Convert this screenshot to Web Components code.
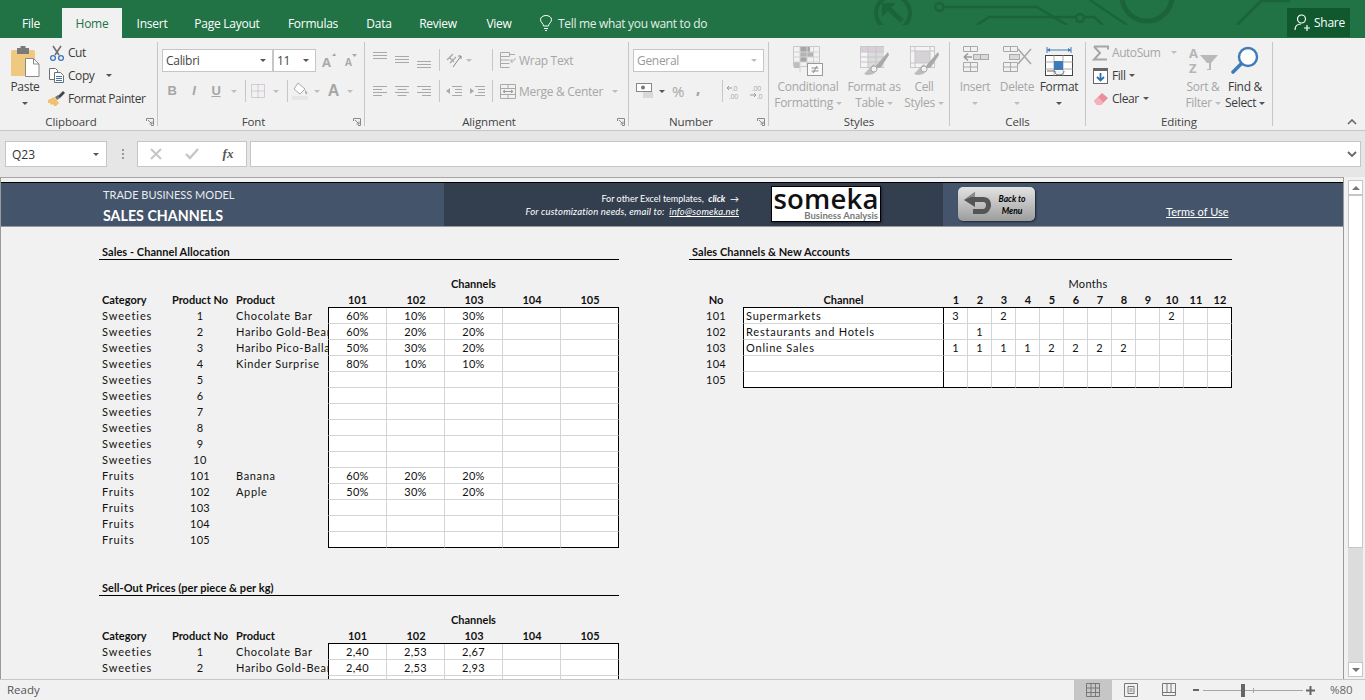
<!DOCTYPE html>
<html lang="en">
<head>
<meta charset="utf-8">
<title>Sales Channels</title>
<style>
  html, body { margin: 0; height: 100%; overflow: hidden; background: #f1f1f1; }
  body { display: flex; flex-direction: column; width: 1365px; height: 700px; font-family: "Open Sans", "Noto Sans", sans-serif; }
</style>
</head>
<body>

<excel-tabs></excel-tabs>

<excel-ribbon>
  <ribbon-group label="Clipboard" width="158" launcher>
    <div style="display:flex">
      <ribbon-big icon="paste" label="Paste" caret width="50" active></ribbon-big>
      <div style="display:flex;flex-direction:column;margin:-1px 0 0 -3px">
        <ribbon-small icon="cut" label="Cut" active></ribbon-small>
        <ribbon-small icon="copy" label="Copy" active caret="wide"></ribbon-small>
        <ribbon-small icon="painter" label="Format Painter" active></ribbon-small>
      </div>
    </div>
  </ribbon-group>

  <ribbon-group label="Font" width="207" launcher>
    <font-tools></font-tools>
  </ribbon-group>

  <ribbon-group label="Alignment" width="264" launcher>
    <align-tools></align-tools>
  </ribbon-group>

  <ribbon-group label="Number" width="140" launcher>
    <number-tools></number-tools>
  </ribbon-group>

  <ribbon-group label="Styles" width="181">
    <div style="display:flex;padding-left:1px">
      <ribbon-big icon="cond" label="Conditional|Formatting" caret width="76"></ribbon-big>
      <ribbon-big icon="table" label="Format as|Table" caret width="56"></ribbon-big>
      <ribbon-big icon="cellstyle" label="Cell|Styles" caret width="44"></ribbon-big>
    </div>
  </ribbon-group>

  <ribbon-group label="Cells" width="136">
    <div style="display:flex;padding-left:4px">
      <ribbon-big icon="insert" label="Insert" caret width="42"></ribbon-big>
      <ribbon-big icon="delete" label="Delete" caret width="42"></ribbon-big>
      <ribbon-big icon="format" label="Format" caret width="42" active></ribbon-big>
    </div>
  </ribbon-group>

  <ribbon-group label="Editing" width="187">
    <div style="display:flex">
      <div style="display:flex;flex-direction:column;box-sizing:border-box;margin-top:-1px;padding-left:5px;width:95px">
        <ribbon-small icon="sigma" label="AutoSum" caret="far"></ribbon-small>
        <ribbon-small icon="fill" label="Fill" active caret="near"></ribbon-small>
        <ribbon-small icon="eraser" label="Clear" active caret="near"></ribbon-small>
      </div>
      <ribbon-big icon="sort" label="Sort &amp;|Filter" caret width="44"></ribbon-big>
      <ribbon-big icon="find" label="Find &amp;|Select" caret width="40" active></ribbon-big>
    </div>
  </ribbon-group>
</excel-ribbon>

<formula-bar></formula-bar>

<div style="display:flex;height:502px">
  <work-sheet></work-sheet>
  <sheet-scrollbar></sheet-scrollbar>
</div>

<status-bar></status-bar>

<script>
const ink = '#a9a9a9';
const ICONS = {
  paste: [30, 31, `<rect x="1" y="4" width="24" height="26" rx="1.5" fill="#efc97f"/><rect x="7" y="2" width="12" height="6" fill="#7a7a7a"/><rect x="10.5" y="0" width="5" height="4" fill="#7a7a7a"/><path d="M15.5 12.5h8l5.5 5.5v12.5h-13.5z" fill="#fff" stroke="#8a8a8a"/><path d="M23.5 12.5v5.5h5.5" fill="none" stroke="#8a8a8a"/>`],
  cut: [16, 16, `<path d="M4 1l6 9M12 1l-6 9" stroke="#6f6f6f" stroke-width="1.6" fill="none"/><circle cx="4" cy="13" r="2.4" fill="none" stroke="#3c78b8" stroke-width="1.3"/><circle cx="12" cy="13" r="2.4" fill="none" stroke="#3c78b8" stroke-width="1.3"/>`],
  copy: [16, 15, `<path d="M.5.5h6l2 2v3h-3v6h-5z" fill="#fff" stroke="#6f6f6f"/><path d="M5.5 4.5h6l3 3v7h-9z" fill="#fff" stroke="#6f6f6f"/><path d="M7 8.5h6M7 10.5h6M7 12.5h6" stroke="#3c78b8"/>`],
  painter: [17, 15, `<path d="M0 9l6-3 5 6-3 3H6L5 13l-2 1-1-2-2 0z" fill="#efc16d"/><path d="M7 6l3-2 2 3-3 2z" fill="#777"/><path d="M10 5l5-5 2 2-5 5z" fill="#444"/>`],
  fontUp: [14, 15, `<text x="0" y="14" font-size="13" font-weight="700" fill="${ink}" font-family="Open Sans">A</text><path d="M10 3l2.5-3 1.5 3z" fill="${ink}"/>`],
  fontDown: [12, 13, `<text x="0" y="12" font-size="10" font-weight="700" fill="${ink}" font-family="Open Sans">A</text><path d="M7 0h5l-2.500 3z" fill="${ink}"/>`],
  borders: [14, 14, `<path d="M.5.5h13v13h-13zM7 .5v13M.5 7h13" fill="none" stroke="#b9a6bd" stroke-dasharray="1 1"/>`],
  bucket: [17, 18, `<path d="M6 1l7 6-5 5-6-5z" fill="#fff" stroke="${ink}"/><path d="M13 8c2 2 3 3 2 4s-2 0-2-4z" fill="${ink}"/><rect x="0" y="14" width="16" height="4" fill="#e6e6e6"/>`],
  alignTop: [14, 16, `<path d="M0 .5h14M0 3.500h14M0 6.500h14" stroke="${ink}"/>`],
  alignMid: [14, 16, `<path d="M0 4.500h14M0 7.500h14M0 10.500h14" stroke="${ink}"/>`],
  alignBot: [14, 16, `<path d="M0 9.500h14M0 12.500h14M0 15.500h14" stroke="${ink}"/>`],
  left: [14, 11, `<path d="M0 .5h14M0 3.500h9M0 6.500h14M0 9.500h9" stroke="${ink}"/>`],
  center: [14, 11, `<path d="M0 .5h14M2.500 3.500h9M0 6.500h14M2.500 9.500h9" stroke="${ink}"/>`],
  right: [14, 11, `<path d="M0 .5h14M5 3.500h9M0 6.500h14M5 9.500h9" stroke="${ink}"/>`],
  orient: [16, 16, `<path d="M1 8l6-6M4 11l6-6M3 5l5 5" stroke="${ink}" stroke-width="1.400" fill="none"/><path d="M7 15L15 4M15 4h-3M15 4v3" stroke="#888" fill="none"/>`],
  outdent: [16, 11, `<path d="M6 .5h10M9 3.500h7M9 6.500h7M6 9.500h10" stroke="${ink}"/><path d="M0 5l4-3v6z" fill="${ink}"/>`],
  indent: [16, 11, `<path d="M6 .5h10M9 3.500h7M9 6.500h7M6 9.500h10" stroke="${ink}"/><path d="M5 5L1 2v6z" fill="${ink}"/>`],
  wrap: [16, 16, `<path d="M.5.5h9v4h-9zM.5 4.500v11h9M.5 8h9M.5 11.500h9M10 2.500h5M15 6c0 3-2 3-4 3m1.500-2l-2 2 2 2" fill="none" stroke="${ink}"/>`],
  merge: [16, 15, `<path d="M.5.5h15v14H.5zM.5 4.500h15M.5 10.500h15M8 .5v4M8 10.500v4" fill="none" stroke="${ink}"/><path d="M3 7.500h10M3 7.500l2-1.500M3 7.500l2 1.500M13 7.500l-2-1.500M13 7.500l-2 1.500" stroke="#999" fill="none"/>`],
  money: [17, 16, `<rect x=".5" y=".5" width="15" height="8" fill="#fff" stroke="#888"/><circle cx="7" cy="4.500" r="2" fill="#777"/><path d="M7 10h10M7 12h10M7 14h10" stroke="#cfcfcf" stroke-width="1.400"/>`],
  decLess: [15, 15, `<text x="5" y="7" font-size="7" fill="${ink}" font-family="Open Sans">.0</text><text x="2" y="14.500" font-size="7" fill="${ink}" font-family="Open Sans">.00</text><path d="M0 4h5M0 4l2-2M0 4l2 2" stroke="#999" fill="none"/>`],
  decMore: [15, 15, `<text x="3" y="7" font-size="7" fill="${ink}" font-family="Open Sans">.00</text><text x="8" y="14.500" font-size="7" fill="${ink}" font-family="Open Sans">.0</text><path d="M1 11h6M7 11l-2-2M7 11l-2 2" stroke="#999" fill="none"/>`],
  cond: [30, 30, `<path d="M.5.5h26v20h-26z" fill="#f4f1f4" stroke="#c9c9c9"/><rect x="7" y="1" width="10" height="5" fill="#a6a6a6"/><rect x="7" y="6" width="14" height="5" fill="#b3b3b3"/><rect x="7" y="11" width="7" height="5" fill="#a6a6a6"/><rect x="1" y="16" width="6" height="6" fill="#bdbdbd"/><path d="M7 .5v26M14 .5v20M20.500 .5v20M.5 6h26M.5 11h26M.5 16h26" stroke="#d3d3d3" fill="none"/><rect x="14.500" y="17.500" width="15" height="12" fill="#fafafa" stroke="#999"/><path d="M18.500 22h7M18.500 25h7M24 20l-4 7" stroke="#8a8a8a"/>`],
  table: [29, 29, `<rect x=".5" y=".5" width="23" height="21" fill="#f7f2f7" stroke="#c9c9c9"/><rect x="1" y="1" width="23" height="5" fill="#d9cfd9"/><rect x="8" y="6" width="16" height="15" fill="#dcdcdc"/><path d="M8 .5v21M16 .5v21M.5 6h23M.5 11h23M.5 16h23" stroke="#c6c6c6" fill="none"/><path d="M28 6L15 21c3 2 6 0 6 0l8-12z" fill="#a9a9a9"/><path d="M14 18c-3 2-6 6-10 10 5 2 11 1 13-5z" fill="#bcbcbc"/><circle cx="14" cy="23" r="3" fill="#f1f1f1" stroke="#a9a9a9"/>`],
  cellstyle: [29, 29, `<rect x=".5" y=".5" width="24" height="21" fill="#f7f2f7" stroke="#c9c9c9"/><rect x="5" y="5" width="15" height="12" fill="#d4d4d4"/><path d="M5 .5v21M20 .5v21M.5 5h24M.5 17h24" stroke="#c6c6c6" fill="none"/><path d="M28 6L15 21c3 2 6 0 6 0l8-12z" fill="#a9a9a9"/><path d="M14 18c-3 2-6 6-10 10 5 2 11 1 13-5z" fill="#bcbcbc"/><circle cx="14" cy="23" r="3" fill="#f1f1f1" stroke="#a9a9a9"/>`],
  insert: [27, 26, `<path d="M1.500.5h14v5h-14zM8.500.5v5M1.500 16.500h14v9h-14zM8.500 16.500v9M1.500 21h14" fill="none" stroke="${ink}"/><rect x="11.500" y="8.500" width="15" height="5" fill="#d9d9d9" stroke="${ink}"/><path d="M18.500 8.500v5" stroke="${ink}"/><path d="M2 11h8M2 11l4-3.500M2 11l4 3.500" stroke="#999" stroke-width="1.500" fill="none"/>`],
  delete: [30, 26, `<path d="M1.500.5h14v5h-14zM8.500.5v5M1.500 16.500h14v9h-14zM8.500 16.500v9M1.500 21h14" fill="none" stroke="${ink}"/><rect x="7.500" y="8.500" width="10" height="5" fill="#d9d9d9" stroke="${ink}"/><path d="M16 3l13 15M29 3L16 18" stroke="#a9a9a9" stroke-width="1.600" fill="none"/>`],
  format: [28, 31, `<path d="M2 4h24M2 1v6M26 1v6" stroke="#3f7ab9" fill="none"/><path d="M2 4l3-2v4zM26 4l-3-2v4z" fill="#3f7ab9"/><rect x=".5" y="9.500" width="27" height="20" fill="#fff" stroke="#444"/><path d="M9 9.500v20M18 9.500v20M.5 16h27M.5 23h27" stroke="#aaa"/><rect x="9" y="15" width="9" height="9" fill="#3f7ab9"/><path d="M2 25h8c0 4 2 4 5 4 2 0 4-2 4-4" fill="#f1f1f1" stroke="#666"/>`],
  sigma: [16, 14, `<path d="M1 .5h14v3M13 12.500v1H1l6-6.500L1 .5" fill="none" stroke="#a6a6a6" stroke-width="2"/>`],
  fill: [15, 16, `<rect x=".5" y=".5" width="14" height="15" fill="#fff" stroke="#666"/><rect x="0" y="0" width="15" height="3" fill="#666"/><path d="M7.500 5v7M4 9l3.500 3.500L11 9" stroke="#2f6fb0" stroke-width="1.800" fill="none"/>`],
  eraser: [14, 13, `<path d="M0 9l8-8 6 5-7 7H3z" fill="#ec8d9b"/><path d="M0 9l4-4 5 5-2 3H3z" fill="#f3b2bb"/>`],
  sort: [30, 27, `<text x="1" y="12" font-size="13" font-weight="700" fill="#b5b5b5" font-family="Open Sans">A</text><text x="1" y="27" font-size="13" font-weight="700" fill="#b5b5b5" font-family="Open Sans">Z</text><path d="M12 9h18l-7 8v7h-4v-7z" fill="#b9b9b9"/><path d="M19 17v6h2v-6z" fill="#f1f1f1"/>`],
  find: [28, 28, `<circle cx="17" cy="11" r="9" fill="#fff" stroke="#3f7ab9" stroke-width="2.400"/><path d="M10 18L2 26" stroke="#3f7ab9" stroke-width="3.600" stroke-linecap="round"/>`]
};

class RibbonIcon extends HTMLElement {
  connectedCallback() {
    const [w, h, body] = ICONS[this.getAttribute('name')];
    this.attachShadow({ mode: 'open' }).innerHTML = `
      <style>:host { display: inline-flex; flex: none; } svg { display: block; overflow: visible; }</style>
      <svg width="${w}" height="${h}" viewBox="0 0 ${w} ${h}">${body}</svg>`;
  }
}
customElements.define('ribbon-icon', RibbonIcon);

class RibbonCaret extends HTMLElement {
  connectedCallback() {
    const color = this.hasAttribute('active') ? '#555' : '#bdbdbd';
    this.attachShadow({ mode: 'open' }).innerHTML = `
      <style>
        :host { display: inline-block; flex: none; width: 0; height: 0; vertical-align: middle;
          border-left: 3px solid transparent; border-right: 3px solid transparent; border-top: 3px solid ${color}; }
      </style>`;
  }
}
customElements.define('ribbon-caret', RibbonCaret);

class ExcelTabs extends HTMLElement {
  connectedCallback() {
    const tabs = [['File', 62], ['Home', 60], ['Insert', 60], ['Page Layout', 90], ['Formulas', 82], ['Data', 50], ['Review', 68], ['View', 54]];
    this.attachShadow({ mode: 'open' }).innerHTML = `
      <style>
        :host { display: flex; flex: none; position: relative; height: 38px; background: #217346; color: #fff;
          font: 12px/15px "Open Sans", sans-serif; letter-spacing: -.25px; overflow: hidden; }
        .tab { display: flex; align-items: center; justify-content: center; height: 30px; margin-top: 8px; position: relative; }
        .on { background: #f1f1f1; color: #217346; }
        .tell { display: flex; align-items: center; gap: 6px; height: 30px; margin: 8px 0 0 14px; color: #e3efe8; position: relative; letter-spacing: -.32px; }
        .art { position: absolute; left: 860px; top: 0; }
        .share { position: absolute; right: 15px; top: 8px; width: 63px; height: 29px; background: #10592f;
          display: flex; align-items: center; gap: 4px; padding-left: 7px; box-sizing: border-box; }
      </style>
      <svg class="art" width="430" height="25" viewBox="0 0 430 25" fill="none" stroke="#1b6439" stroke-width="2.500">
        <circle cx="33" cy="13" r="17" stroke-width="4"/>
        <path d="M42 21L27 7" stroke-width="5"/><path d="M22 3h14L22 17z" fill="#1b6439" stroke="none"/>
        <circle cx="79.500" cy="7" r="4"/><path d="M84 7h93l30 18"/>
        <path d="M117 25l12-8h87"/><circle cx="220" cy="18" r="4"/><path d="M224 17h10l9 8"/>
        <path d="M230 0l37 25"/><circle cx="287" cy="-4" r="25" stroke-width="5"/>
        <path d="M377 25L401 1h29"/>
      </svg>
      ${tabs.map(([t, w]) => `<div class="tab ${t === 'Home' ? 'on' : ''}" style="width:${w}px">${t}</div>`).join('')}
      <div class="tell">
        <svg width="12" height="16" viewBox="0 0 12 16" fill="none" stroke="#fff"><path d="M3.500 11c0-2.500-3-3.500-3-6.500a5.500 4 0 0 1 11 0c0 3-3 4-3 6.500zM4 13.500h4M5 15.500h2"/></svg>
        <span>Tell me what you want to do</span>
      </div>
      <div class="share">
        <svg width="16" height="17" viewBox="0 0 16 17" fill="none" stroke="#fff" stroke-width="1.200"><circle cx="7.500" cy="5" r="4"/><path d="M1 16c0-4 2-6 6-6M10 14h6M13 11v6"/></svg>
        <span>Share</span>
      </div>`;
  }
}
customElements.define('excel-tabs', ExcelTabs);

class ExcelRibbon extends HTMLElement {
  connectedCallback() {
    this.attachShadow({ mode: 'open' }).innerHTML = `
      <style>
        :host { display: flex; flex: none; position: relative; height: 93px; box-sizing: border-box; padding-top: 4px;
          background: #f1f1f1; border-bottom: 1px solid #c6c6c6; }
        .collapse { position: absolute; right: 8px; bottom: 5px; }
      </style>
      <slot></slot>
      <svg class="collapse" width="10" height="6" viewBox="0 0 10 6" fill="none" stroke="#666" stroke-width="1.600"><path d="M1 5l4-4 4 4"/></svg>`;
  }
}
customElements.define('excel-ribbon', ExcelRibbon);

class RibbonGroup extends HTMLElement {
  connectedCallback() {
    const launcher = this.hasAttribute('launcher') ? `
      <svg class="launch" width="8" height="8" viewBox="0 0 8 8" fill="none" stroke="#888"><path d="M.5 3V.5H7.500V7.500H5M2 2l4 4M6 3.500V6H3.500"/></svg>` : '';
    this.attachShadow({ mode: 'open' }).innerHTML = `
      <style>
        :host { display: flex; flex: none; flex-direction: column; box-sizing: border-box; height: 84px;
          width: ${this.getAttribute('width')}px; border-right: 1px solid #c6c6c6; }
        .body { flex: 1; min-height: 0; }
        .foot { display: flex; align-items: center; height: 13px; margin-bottom: -2px; color: #444;
          font: 11.500px/13px "Open Sans", sans-serif; letter-spacing: -.1px; }
        .name { flex: 1; text-align: center; }
        .launch { margin: 0 3px 0 4px; }
      </style>
      <div class="body"><slot></slot></div>
      <div class="foot"><span class="name">${this.getAttribute('label')}</span>${launcher}</div>`;
  }
}
customElements.define('ribbon-group', RibbonGroup);

class RibbonBig extends HTMLElement {
  connectedCallback() {
    const on = this.hasAttribute('active');
    const lines = this.getAttribute('label').split('|');
    const caret = this.hasAttribute('caret');
    const caretTag = `<ribbon-caret ${on ? 'active' : ''}></ribbon-caret>`;
    const text = lines.map((l, i) => `<div class="line">${l}${caret && lines.length > 1 && i === 1 ? ' ' + caretTag : ''}</div>`).join('');
    this.attachShadow({ mode: 'open' }).innerHTML = `
      <style>
        :host { display: flex; flex: none; flex-direction: column; align-items: center; box-sizing: border-box; padding-top: 4px;
          width: ${this.getAttribute('width')}px; color: ${on ? '#3c3c3c' : '#a6a6a6'};
          font: 12px/16px "Open Sans", sans-serif; letter-spacing: -.3px; }
        .icon { height: 33px; }
        .line { white-space: nowrap; text-align: center; }
        .solo { height: 16px; display: flex; align-items: center; }
      </style>
      <div class="icon"><ribbon-icon name="${this.getAttribute('icon')}"></ribbon-icon></div>
      ${text}
      ${caret && lines.length === 1 ? `<div class="solo">${caretTag}</div>` : ''}`;
  }
}
customElements.define('ribbon-big', RibbonBig);

class RibbonSmall extends HTMLElement {
  connectedCallback() {
    const on = this.hasAttribute('active');
    const gap = { wide: 12, far: 11, near: 4 }[this.getAttribute('caret')];
    this.attachShadow({ mode: 'open' }).innerHTML = `
      <style>
        :host { display: flex; align-items: center; height: 23px; white-space: nowrap; color: ${on ? '#3c3c3c' : '#a6a6a6'};
          font: 12px/16px "Open Sans", sans-serif; letter-spacing: -.45px; }
        .icon { display: flex; justify-content: center; width: 19px; margin-right: 2px; }
        ribbon-caret { margin-left: ${gap}px; }
      </style>
      <span class="icon"><ribbon-icon name="${this.getAttribute('icon')}"></ribbon-icon></span>
      <span>${this.getAttribute('label')}</span>
      ${gap ? `<ribbon-caret ${on ? 'active' : ''}></ribbon-caret>` : ''}`;
  }
}
customElements.define('ribbon-small', RibbonSmall);

// shared look of the compact tool rows in the Font, Alignment and Number groups
const toolStyle = `
  :host { display: flex; flex-direction: column; height: 100%; box-sizing: border-box; padding-top: 7px; color: #a6a6a6;
    font: 12px/16px "Open Sans", sans-serif; letter-spacing: -.3px; }
  .row { display: flex; align-items: center; height: 22px; }
  .row + .row { margin-top: 9px; }
  .cell { display: flex; align-items: center; justify-content: center; flex: none; }
  .sep { flex: none; width: 1px; height: 22px; background: #c6c6c6; }
  .select { display: flex; align-items: center; justify-content: space-between; box-sizing: border-box; height: 23px; flex: none;
    background: #fff; border: 1px solid #c6c6c6; padding: 1px 6px 0 3px; color: #444; }
`;

class FontTools extends HTMLElement {
  connectedCallback() {
    this.attachShadow({ mode: 'open' }).innerHTML = `
      <style>${toolStyle}
        .letter { font: 700 13px/16px "Liberation Sans", sans-serif; color: #a6a6a6; }
      </style>
      <div class="row" style="padding-left:4px">
        <div class="select" style="width:111px">Calibri<ribbon-caret active></ribbon-caret></div>
        <div class="select" style="width:43px">11<ribbon-caret active></ribbon-caret></div>
        <div class="cell" style="width:20px;margin-left:3px"><ribbon-icon name="fontUp"></ribbon-icon></div>
        <div class="cell" style="width:20px;margin-left:2px"><ribbon-icon name="fontDown"></ribbon-icon></div>
      </div>
      <div class="row">
        <div class="cell letter" style="width:22px;margin-left:3px">B</div>
        <div class="cell letter" style="width:22px;font-style:italic">I</div>
        <div class="cell letter" style="width:22px;text-decoration:underline">U</div>
        <div class="cell" style="width:13px"><ribbon-caret></ribbon-caret></div>
        <div class="sep" style="margin-left:5px"></div>
        <div class="cell" style="width:22px;margin-left:1px"><ribbon-icon name="borders"></ribbon-icon></div>
        <div class="cell" style="width:13px"><ribbon-caret></ribbon-caret></div>
        <div class="sep" style="margin-left:5px"></div>
        <div class="cell" style="width:24px"><ribbon-icon name="bucket"></ribbon-icon></div>
        <div class="cell" style="width:10px"><ribbon-caret></ribbon-caret></div>
        <div class="cell letter" style="width:23px;font-size:16px">A</div>
        <div class="cell" style="width:10px"><ribbon-caret></ribbon-caret></div>
      </div>`;
  }
}
customElements.define('font-tools', FontTools);

class AlignTools extends HTMLElement {
  connectedCallback() {
    const cell = (n, w = 22) => `<div class="cell" style="width:${w}px"><ribbon-icon name="${n}"></ribbon-icon></div>`;
    this.attachShadow({ mode: 'open' }).innerHTML = `
      <style>${toolStyle}
        .wide { display: flex; align-items: center; gap: 3px; }
        .wide span { padding-top: 2px; }
      </style>
      <div class="row">
        <div style="width:4px"></div>${cell('alignTop')}${cell('alignMid')}${cell('alignBot')}
        <div class="sep" style="margin-left:4px"></div>
        ${cell('orient', 28)}<div class="cell" style="width:10px;margin-left:-4px"><ribbon-caret></ribbon-caret></div>
        <div class="sep" style="margin-left:18px"></div>
        <div class="wide" style="margin-left:7px"><ribbon-icon name="wrap"></ribbon-icon><span>Wrap Text</span></div>
      </div>
      <div class="row">
        <div style="width:4px"></div>${cell('left')}${cell('center')}${cell('right')}
        <div class="sep" style="margin-left:4px"></div>
        ${cell('outdent', 28)}${cell('indent', 18)}
        <div class="sep" style="margin-left:6px"></div>
        <div class="wide" style="margin-left:7px"><ribbon-icon name="merge"></ribbon-icon><span>Merge &amp; Center</span></div>
        <div class="cell" style="margin-left:9px"><ribbon-caret></ribbon-caret></div>
      </div>`;
  }
}
customElements.define('align-tools', AlignTools);

class NumberTools extends HTMLElement {
  connectedCallback() {
    this.attachShadow({ mode: 'open' }).innerHTML = `
      <style>${toolStyle}</style>
      <div class="row" style="padding-left:4px">
        <div class="select" style="width:131px;color:#9a9a9a">General<ribbon-caret></ribbon-caret></div>
      </div>
      <div class="row">
        <div class="cell" style="width:24px;margin-left:3px"><ribbon-icon name="money"></ribbon-icon></div>
        <div class="cell" style="width:12px"><ribbon-caret active></ribbon-caret></div>
        <div class="cell" style="width:20px;font-size:15px">%</div>
        <div class="cell" style="width:20px;height:12px;font-weight:800;font-size:14px;line-height:8px;align-items:flex-start">,</div>
        <div style="width:14px"></div>
        <div class="sep"></div>
        <div class="cell" style="width:22px"><ribbon-icon name="decLess"></ribbon-icon></div>
        <div class="cell" style="width:22px"><ribbon-icon name="decMore"></ribbon-icon></div>
      </div>`;
  }
}
customElements.define('number-tools', NumberTools);

class FormulaBar extends HTMLElement {
  connectedCallback() {
    this.attachShadow({ mode: 'open' }).innerHTML = `
      <style>
        :host { display: flex; flex: none; align-items: center; height: 46px; box-sizing: border-box; padding: 0 4px 0 5px;
          background: #e6e6e6; font: 12px/16px "Open Sans", sans-serif; color: #333; }
        .box { display: flex; align-items: center; box-sizing: border-box; height: 26px; background: #fff; border: 1px solid #c6c6c6; }
        .name { width: 102px; justify-content: space-between; padding: 1px 7px 0 6px; }
        .grip { display: flex; flex-direction: column; gap: 2px; margin: 0 13px 0 15px; }
        .grip i { display: block; width: 2px; height: 2px; background: #999; }
        .fx { display: grid; grid-template-columns: repeat(3, 36px); justify-items: center; width: 110px; color: #bbb; }
        .input { flex: 1; margin-left: 3px; justify-content: flex-end; padding-right: 3px; }
        .fn { font: italic 700 13px/16px "Liberation Serif", serif; color: #555; }
      </style>
      <div class="box name"><span>Q23</span><ribbon-caret active></ribbon-caret></div>
      <div class="grip"><i></i><i></i><i></i></div>
      <div class="box fx">
        <svg width="12" height="12" viewBox="0 0 12 12" stroke="#c6c6c6" stroke-width="2" fill="none"><path d="M1 1l10 10M11 1L1 11"/></svg>
        <svg width="14" height="12" viewBox="0 0 14 12" stroke="#c6c6c6" stroke-width="2.400" fill="none"><path d="M1 6l4 4 8-9"/></svg>
        <span class="fn">fx</span>
      </div>
      <div class="box input">
        <svg width="10" height="7" viewBox="0 0 10 7" stroke="#666" stroke-width="1.800" fill="none"><path d="M1 1l4 4 4-4"/></svg>
      </div>`;
  }
}
customElements.define('formula-bar', FormulaBar);

class SheetBanner extends HTMLElement {
  connectedCallback() {
    this.attachShadow({ mode: 'open' }).innerHTML = `
      <style>
        :host { display: flex; flex: none; height: 45px; box-sizing: border-box; color: #fff; background: #44546a;
          border-top: 1px solid #000; border-bottom: 1px solid #999; font-family: Lato, sans-serif; }
        .title { width: 443px; box-sizing: border-box; padding: 4px 0 0 102px; }
        .sup { font-size: 11px; line-height: 16px; color: #e8ebef; }
        .main { font-size: 14.250px; font-weight: 700; line-height: 25px; }
        .dark { display: flex; width: 499px; background: #333f4f; }
        .note { width: 295px; margin-top: 9px; text-align: right; font-size: 9px; line-height: 13px; }
        .wide { font-size: 9.500px; letter-spacing: .16px; }
        .note em { font-weight: 700; }
        .note a { color: #fff; text-decoration: underline; }
        .logo { box-sizing: border-box; width: 110px; height: 36px; margin: 3px 0 0 32px; background: #fff; border: 1px solid #000;
          box-shadow: 1px 1px 2px #1c2530; color: #111; text-align: center; }
        .logo b { display: block; font: 600 27.500px/24px "Open Sans", sans-serif; letter-spacing: .2px; }
        .logo span { display: block; text-align: right; padding-right: 2px; font: 700 9.500px/10px Lato, sans-serif; color: #7a7a7a; }
        .rest { display: flex; flex: 1; }
        .back { display: flex; align-items: center; box-sizing: border-box; width: 77px; height: 34px; margin: 4px 0 0 15px; padding-left: 5px;
          border-radius: 5px; background: linear-gradient(#e3e3e3, #bdbdbd 55%, #9c9c9c); box-shadow: 1px 1px 2px #1c2530; color: #000; }
        .back span { flex: 1; padding: 2px 4px 0 0; text-align: center; font: italic 700 8.500px/12px Lato, sans-serif; }
        .terms { margin: 21px 0 0 131px; font-size: 11px; line-height: 16px; text-decoration: underline; }
      </style>
      <div class="title">
        <div class="sup">TRADE BUSINESS MODEL</div>
        <div class="main">SALES CHANNELS</div>
      </div>
      <div class="dark">
        <div class="note">
          <div>For other Excel templates, &nbsp;<em><i>click</i></em> &nbsp;→</div>
          <div class="wide"><i>For customization needs, email to: &nbsp;<a>info@someka.net</a></i></div>
        </div>
        <div class="logo"><b>someka</b><span>Business Analysis</span></div>
      </div>
      <div class="rest">
        <div class="back">
          <svg width="30" height="26" viewBox="0 0 30 26"><path d="M1 9L12 1v5h8c6 0 8 4 8 8s-3 9-8 9H10v-5h10c2 0 3-2 3-4s-1-3-3-3h-8v5z" fill="#555"/><path d="M1 9L12 1v5H8z" fill="#8b8b8b"/></svg>
          <span>Back to<br>Menu</span>
        </div>
        <div class="terms">Terms of Use</div>
      </div>`;
  }
}
customElements.define('sheet-banner', SheetBanner);

const sheetCellStyle = `
  :host { display: block; font: 11px/16px Lato, "Open Sans", sans-serif; letter-spacing: .3px; color: #111; }
  .title { height: 16px; box-sizing: border-box; border-bottom: 1px solid #000; padding-left: 3px; margin-bottom: 16px;
    font-weight: 700; line-height: 15px; letter-spacing: .05px; white-space: nowrap; }
  .grid { display: grid; grid-auto-rows: 16px; }
  .c { white-space: nowrap; overflow: hidden; text-align: center; box-sizing: border-box; }
  .l { text-align: left; }
  .h { font-weight: 700; letter-spacing: 0; }
  .v { background: #fff; border-right: 1px solid #d4d4d4; border-bottom: 1px solid #d4d4d4; }
  .cat { letter-spacing: .9px; padding-left: 3px; }
  .prod { letter-spacing: .65px; padding-left: 6px; }
  .name { letter-spacing: .78px; padding-left: 2px; }
`;

// block of product rows with five channel columns, rows are "Category|No|Product|a|b|c" split by ";"
class ChannelTable extends HTMLElement {
  connectedCallback() {
    const rows = this.getAttribute('rows').split(';').map(r => r.split('|'));
    const ends = Number(this.getAttribute('closed')) || 0;
    const vals = (r, i) => [0, 1, 2, 3, 4].map(k => {
      const side = k === 0 ? 'border-left:1px solid #000;' : k === 4 ? 'border-right:1px solid #000;' : '';
      const low = ends && i === rows.length - 1 ? 'border-bottom:1px solid #000;' : '';
      return `<div class="c v" style="${side}${low}">${r[3 + k] || ''}</div>`;
    }).join('');
    const head = [101, 102, 103, 104, 105].map(n => `<div class="c h" style="border-bottom:1px solid #000">${n}</div>`).join('');
    this.attachShadow({ mode: 'open' }).innerHTML = `
      <style>${sheetCellStyle}
        :host { width: 520px; }
        .grid { grid-template-columns: 71px 60px 98px 59px 58px 58px 58px 58px; }
      </style>
      <div class="title">${this.getAttribute('label')}</div>
      <div class="grid">
        <div class="c h" style="grid-column:4 / 9">Channels</div>
        <div class="c l h" style="grid-column:1;padding-left:3px">Category</div><div class="c h">Product No</div><div class="c l h" style="padding-left:6px">Product</div>${head}
        ${rows.map((r, i) => `<div class="c l cat">${r[0]}</div><div class="c">${r[1]}</div><div class="c l prod">${r[2] || ''}</div>${vals(r, i)}`).join('')}
      </div>`;
  }
}
customElements.define('channel-table', ChannelTable);

class AccountsTable extends HTMLElement {
  connectedCallback() {
    const rows = this.getAttribute('rows').split(';').map(r => r.split('|'));
    const months = Array.from({ length: 12 }, (_, i) => i + 1);
    this.attachShadow({ mode: 'open' }).innerHTML = `
      <style>${sheetCellStyle}
        :host { width: 543px; }
        .grid { grid-template-columns: 54px 201px repeat(12, 24px); }
      </style>
      <div class="title">${this.getAttribute('label')}</div>
      <div class="grid">
        <div class="c" style="grid-column:3 / 15">Months</div>
        <div class="c h" style="grid-column:1">No</div><div class="c h" style="border-bottom:1px solid #000">Channel</div>
        ${months.map(m => `<div class="c h" style="border-bottom:1px solid #000">${m}</div>`).join('')}
        ${rows.map((r, i) => {
          const low = i === rows.length - 1 ? 'border-bottom:1px solid #000;' : '';
          return `<div class="c">${r[0]}</div>
            <div class="c l v name" style="border-left:1px solid #000;border-right:1px solid #000;${low}">${r[1] || ''}</div>
            ${months.map((m, k) => `<div class="c v" style="${k === 11 ? 'border-right:1px solid #000;' : ''}${low}">${r[2 + k] || ''}</div>`).join('')}`;
        }).join('')}
      </div>`;
  }
}
customElements.define('accounts-table', AccountsTable);

class WorkSheet extends HTMLElement {
  connectedCallback() {
    const sweet = ['Chocolate Bar', 'Haribo Gold-Bears', 'Haribo Pico-Balla', 'Kinder Surprise'];
    const split = ['60%|10%|30%', '60%|20%|20%', '50%|30%|20%', '80%|10%|10%'];
    const alloc = [];
    for (let i = 0; i < 10; i++) alloc.push(`Sweeties|${i + 1}|${sweet[i] || ''}|${split[i] || ''}`);
    alloc.push('Fruits|101|Banana|60%|20%|20%', 'Fruits|102|Apple|50%|30%|20%', 'Fruits|103', 'Fruits|104', 'Fruits|105');
    const prices = ['Sweeties|1|Chocolate Bar|2,40|2,53|2,67', 'Sweeties|2|Haribo Gold-Bears|2,40|2,53|2,93', 'Sweeties|3|||'];
    const accounts = [
      '101|Supermarkets|3||2|||||||2',
      '102|Restaurants and Hotels||1',
      '103|Online Sales|1|1|1|1|2|2|2|2',
      '104',
      '105'
    ];
    this.attachShadow({ mode: 'open' }).innerHTML = `
      <style>
        :host { display: flex; flex-direction: column; flex: none; width: 1344px; box-sizing: border-box; overflow: hidden;
          background: #f1f1f1; border-left: 1px solid #9a9a9a; border-right: 1px solid #9a9a9a; border-top: 1px solid #a6a6a6; padding-top: 4px; }
        .body { display: flex; gap: 70px; padding: 17px 0 0 98px; }
        .col { display: flex; flex-direction: column; gap: 32px; }
      </style>
      <sheet-banner></sheet-banner>
      <div class="body">
        <div class="col">
          <channel-table label="Sales - Channel Allocation" closed="1" rows="${alloc.join(';')}"></channel-table>
          <channel-table label="Sell-Out Prices (per piece &amp; per kg)" rows="${prices.join(';')}"></channel-table>
        </div>
        <div class="col">
          <accounts-table label="Sales Channels &amp; New Accounts" rows="${accounts.join(';')}"></accounts-table>
        </div>
      </div>`;
  }
}
customElements.define('work-sheet', WorkSheet);

class SheetScrollbar extends HTMLElement {
  connectedCallback() {
    this.attachShadow({ mode: 'open' }).innerHTML = `
      <style>
        :host { display: flex; flex-direction: column; width: 21px; box-sizing: border-box; padding: 3px 2px 2px 4px; }
        .btn { display: flex; align-items: center; justify-content: center; flex: none; height: 15px; box-sizing: border-box;
          background: #fff; border: 1px solid #c6c6c6; }
        .track { flex: 1; background: #dcdcdc; }
        .thumb { height: 353px; box-sizing: border-box; background: #fff; border: 1px solid #c6c6c6; margin-top: 0; }
        i { width: 0; height: 0; border-left: 4px solid transparent; border-right: 4px solid transparent; }
      </style>
      <div class="btn"><i style="border-bottom:4px solid #777"></i></div>
      <div class="track"><div class="thumb"></div></div>
      <div class="btn"><i style="border-top:4px solid #777"></i></div>`;
  }
}
customElements.define('sheet-scrollbar', SheetScrollbar);

class StatusBar extends HTMLElement {
  connectedCallback() {
    this.attachShadow({ mode: 'open' }).innerHTML = `
      <style>
        :host { display: flex; flex: none; align-items: stretch; height: 21px; box-sizing: border-box; background: #f1f1f1;
          border-top: 1px solid #c6c6c6; color: #555; font: 11.500px/20px "Open Sans", sans-serif; }
        .ready { flex: 1; padding-left: 7px; }
        .view { display: flex; align-items: center; justify-content: center; width: 38px; }
        .on { background: #c6c6c6; }
        .zoom { display: flex; align-items: center; width: 177px; }
        .track { position: relative; width: 100px; height: 1px; margin: 0 3px 0 2px; background: #a6a6a6; }
        .thumb { position: absolute; left: 38px; top: -6px; width: 4px; height: 13px; background: #666; }
        .tick { position: absolute; left: 50px; top: -2px; width: 1px; height: 5px; background: #a6a6a6; }
        .pct { margin-left: 15px; color: #666; }
      </style>
      <div class="ready">Ready</div>
      <div class="view on"><svg width="14" height="14" viewBox="0 0 14 14" fill="none" stroke="#777"><path d="M.5.5h13v13H.5zM5 .5v13M9.500 .5v13M.5 5h13M.5 9.500h13"/></svg></div>
      <div class="view"><svg width="14" height="14" viewBox="0 0 14 14" fill="none" stroke="#777"><path d="M.5.5h13v13H.5zM4 3.500h6v7H4zM5.500 6h3M5.500 8h3"/></svg></div>
      <div class="view"><svg width="14" height="14" viewBox="0 0 14 14" fill="none" stroke="#777"><path d="M.5.5h13v12H.5zM.5 9.500h13M5 .5v9M9 .5v9" /></svg></div>
      <div class="zoom">
        <svg width="8" height="3" viewBox="0 0 8 3" style="margin-left:5px"><rect width="6" height="2" fill="#666"/></svg>
        <div class="track"><div class="tick"></div><div class="thumb"></div></div>
        <svg width="9" height="9" viewBox="0 0 9 9" fill="none" stroke="#666" stroke-width="2"><path d="M0 4.500h9M4.500 0v9"/></svg>
        <span class="pct">%80</span>
      </div>`;
  }
}
customElements.define('status-bar', StatusBar);
</script>
</body>
</html>
